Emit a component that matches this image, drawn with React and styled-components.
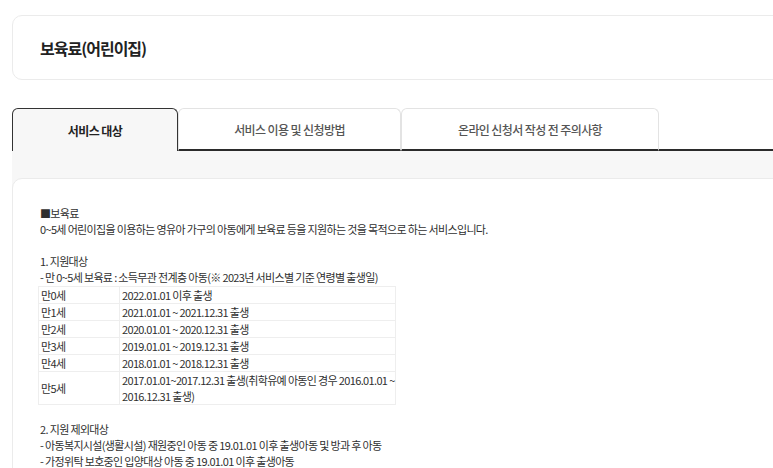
import React from 'react'
import styled, { createGlobalStyle } from 'styled-components'

const GlobalStyle = createGlobalStyle`
  html, body {
    margin: 0;
    padding: 0;
    background: #fff;
    overflow: hidden;
  }
  body {
    font-family: "Noto Sans CJK KR", "Noto Sans", sans-serif;
    color: #333;
  }
`

const Page = styled.div`
  width: 820px;
  padding: 15px 0 0 12px;
`

const HeaderCard = styled.div`
  height: 63px;
  border: 1px solid #ebebeb;
  border-radius: 10px;
  display: flex;
  align-items: center;
  padding-left: 27px;
`

const Title = styled.h2`
  margin: 0;
  font-size: 16px;
  font-weight: 700;
  letter-spacing: -1px;
  color: #222;
`

const TabBar = styled.div`
  display: flex;
  align-items: flex-end;
  margin-top: 28px;
  height: 43px;
`

const Tab = styled.div`
  box-sizing: border-box;
  width: ${p => p.$w}px;
  height: 43px;
  display: flex;
  align-items: center;
  justify-content: center;
  font-size: 12px;
  letter-spacing: -0.6px;
  border-radius: 6px 6px 0 0;
  border: 1px solid ${p => (p.$active ? '#333' : '#e3e3e3')};
  border-bottom: ${p => (p.$active ? 'none' : '2px solid #2b2b2b')};
  background: ${p => (p.$active ? '#f7f7f7' : '#fff')};
  color: ${p => (p.$active ? '#222' : '#555')};
  font-weight: ${p => (p.$active ? 700 : 500)};
`

const Filler = styled.div`
  flex: 1;
  height: 43px;
  box-sizing: border-box;
  border-bottom: 2px solid #2b2b2b;
`

const Panel = styled.div`
  background: linear-gradient(#f7f7f7 0, #f7f7f7 40px, #fff 40px);
  padding-top: 27px;
`

const ContentCard = styled.div`
  background: #fff;
  border: 1px solid #ebebeb;
  border-radius: 10px;
  padding: 26px 0 0 27px;
  height: 320px;
  font-size: 11px;
  line-height: 16px;
  letter-spacing: -0.65px;
  color: #2f2f2f;
`

const Line = styled.div`
  white-space: nowrap;
  margin-top: ${p => (p.$gap ? '16px' : '0')};
`

const Table = styled.table`
  border-collapse: collapse;
  width: 358px;
  margin: 1px 0 0 -2px;
`

const Cell = styled.td`
  border: 1px solid #eeeeee;
  padding: 0 0 0 2px;
  vertical-align: middle;
  height: 16px;
  line-height: 16px;
  width: ${p => (p.$label ? '78px' : 'auto')};
`

const rows = [
  ['만0세', '2022.01.01 이후 출생'],
  ['만1세', '2021.01.01 ~ 2021.12.31 출생'],
  ['만2세', '2020.01.01 ~ 2020.12.31 출생'],
  ['만3세', '2019.01.01 ~ 2019.12.31 출생'],
  ['만4세', '2018.01.01 ~ 2018.12.31 출생'],
  ['만5세', '2017.01.01~2017.12.31 출생(취학유예 아동인 경우 2016.01.01 ~ 2016.12.31 출생)'],
]

const tabs = [
  { label: '서비스 대상', w: 166, active: true },
  { label: '서비스 이용 및 신청방법', w: 223 },
  { label: '온라인 신청서 작성 전 주의사항', w: 258 },
]

export default function App() {
  return (
    <Page>
      <GlobalStyle />
      <HeaderCard>
        <Title>보육료(어린이집)</Title>
      </HeaderCard>
      <TabBar>
        {tabs.map(t => (
          <Tab key={t.label} $w={t.w} $active={t.active}>
            {t.label}
          </Tab>
        ))}
        <Filler />
      </TabBar>
      <Panel>
        <ContentCard>
          <Line>■보육료</Line>
          <Line>0~5세 어린이집을 이용하는 영유아 가구의 아동에게 보육료 등을 지원하는 것을 목적으로 하는 서비스입니다.</Line>
          <Line $gap>1. 지원대상</Line>
          <Line>- 만 0~5세 보육료 : 소득무관 전계층 아동(※ 2023년 서비스별 기준 연령별 출생일)</Line>
          <Table>
            <tbody>
              {rows.map(([a, b]) => (
                <tr key={a}>
                  <Cell $label>{a}</Cell>
                  <Cell>{b}</Cell>
                </tr>
              ))}
            </tbody>
          </Table>
          <Line $gap>2. 지원 제외대상</Line>
          <Line>- 아동복지시설(생활시설) 재원중인 아동 중 19.01.01 이후 출생아동 및 방과 후 아동</Line>
          <Line>- 가정위탁 보호중인 입양대상 아동 중 19.01.01 이후 출생아동</Line>
        </ContentCard>
      </Panel>
    </Page>
  )
}
